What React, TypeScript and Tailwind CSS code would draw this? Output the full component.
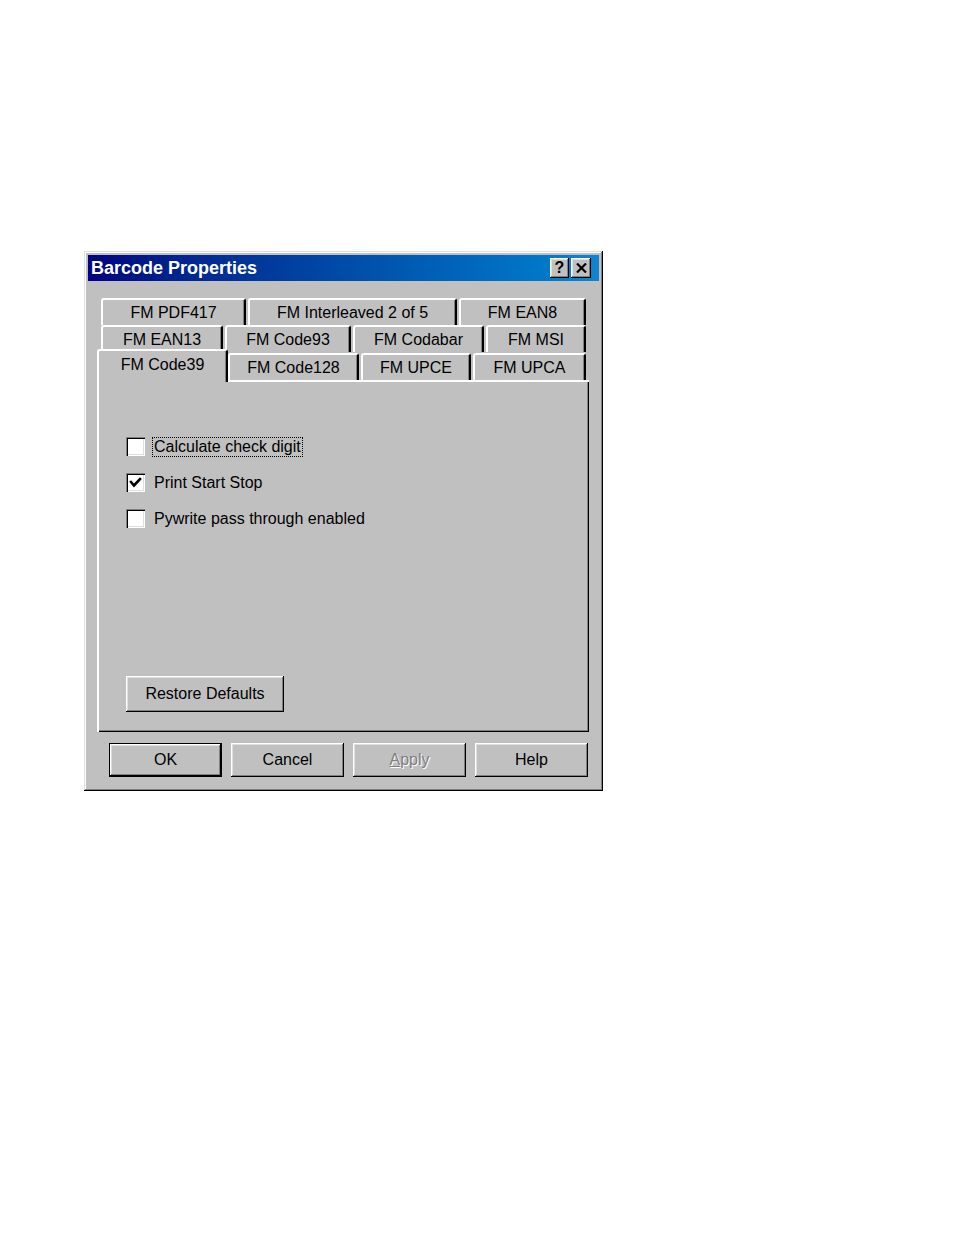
import React from "react";

const font = { fontFamily: '"Liberation Sans", Arial, sans-serif' };

const raised =
  "shadow-[inset_-1px_-1px_0_#000,inset_1px_1px_0_#fff,inset_-2px_-2px_0_#808080,inset_2px_2px_0_#dfdfdf]";

type Tab = { label: string; w: string };

const row1: Tab[] = [
  { label: "FM PDF417", w: "w-[145px]" },
  { label: "FM Interleaved 2 of 5", w: "w-[209px]" },
  { label: "FM EAN8", w: "w-[127px]" },
];

const row2: Tab[] = [
  { label: "FM EAN13", w: "w-[122px]" },
  { label: "FM Code93", w: "w-[126px]" },
  { label: "FM Codabar", w: "w-[131px]" },
  { label: "FM MSI", w: "w-[100px]" },
];

const row3: Tab[] = [
  { label: "FM Code128", w: "w-[131px]" },
  { label: "FM UPCE", w: "w-[110px]" },
  { label: "FM UPCA", w: "w-[113px]" },
];

function TabButton({ label, w }: Tab) {
  return (
    <div
      className={`${w} h-[27px] flex items-center justify-center rounded-t-[3px] border-t-2 border-l-2 border-r-2 border-t-white border-l-white border-r-black bg-[#c0c0c0] text-[16px] text-black shadow-[inset_-1px_0_0_#808080]`}
    >
      {label}
    </div>
  );
}

function Checkbox({
  label,
  checked,
  focused,
}: {
  label: string;
  checked?: boolean;
  focused?: boolean;
}) {
  return (
    <div className="flex h-[19px] items-center">
      <div className="flex h-[19px] w-[19px] shrink-0 items-center justify-center bg-white shadow-[inset_1px_1px_0_#808080,inset_2px_2px_0_#000,inset_-1px_-1px_0_#fff,inset_-2px_-2px_0_#dfdfdf]">
        {checked && (
          <svg width="13" height="13" viewBox="0 0 13 13">
            <path
              d="M2 6 L5 9.5 L11 3"
              fill="none"
              stroke="#000"
              strokeWidth="2.6"
              strokeLinecap="square"
            />
          </svg>
        )}
      </div>
      <span
        className={`ml-[7px] text-[16px] leading-[18px] text-black ${
          focused ? "border border-dotted border-black px-[1px]" : "border border-transparent px-[1px]"
        }`}
      >
        {label}
      </span>
    </div>
  );
}

function DialogButton({
  children,
  isDefault,
  disabled,
}: {
  children: React.ReactNode;
  isDefault?: boolean;
  disabled?: boolean;
}) {
  return (
    <div
      className={`flex h-[34px] w-[113px] items-center justify-center bg-[#c0c0c0] text-[16px] ${
        isDefault
          ? "border border-black shadow-[inset_-1px_-1px_0_#000,inset_1px_1px_0_#fff,inset_-2px_-2px_0_#808080,inset_2px_2px_0_#dfdfdf]"
          : raised
      } ${disabled ? "text-[#808080] [text-shadow:1px_1px_0_#fff]" : "text-black"}`}
    >
      {children}
    </div>
  );
}

export default function App() {
  return (
    <div className="min-h-[1235px] w-full bg-white pl-[84px] pt-[251px]" style={font}>
      <div
        className={`flex h-[540px] w-[519px] flex-col bg-[#c0c0c0] p-[4px] shadow-[inset_-1px_-1px_0_#000,inset_1px_1px_0_#dfdfdf,inset_-2px_-2px_0_#808080,inset_2px_2px_0_#fff]`}
      >
        {/* title bar */}
        <div className="flex h-[26px] shrink-0 items-center justify-between bg-gradient-to-r from-[#000080] to-[#1084d0] pl-[3px] pr-[8px]">
          <span className="text-[18px] font-bold leading-none text-white">
            Barcode Properties
          </span>
          <div className="flex gap-[2px]">
            <div
              className={`flex h-[20px] w-[19px] items-center justify-center bg-[#c0c0c0] text-[16px] font-bold leading-none text-black ${raised}`}
            >
              ?
            </div>
            <div
              className={`flex h-[20px] w-[20px] items-center justify-center bg-[#c0c0c0] ${raised}`}
            >
              <svg width="11" height="10" viewBox="0 0 11 10">
                <path d="M1 0.5 L10 9.5 M10 0.5 L1 9.5" stroke="#000" strokeWidth="2.2" />
              </svg>
            </div>
          </div>
        </div>

        {/* body */}
        <div className="flex flex-1 flex-col pl-[9px] pr-[10px] pt-[17px]">
          <div className="flex flex-col">
            <div className="ml-[4px] flex gap-[2px]">
              {row1.map((t) => (
                <TabButton key={t.label} {...t} />
              ))}
            </div>
            <div className="ml-[4px] flex gap-[2px]">
              {row2.map((t) => (
                <TabButton key={t.label} {...t} />
              ))}
            </div>
            <div className="-mt-[3px] flex h-[31px] items-end">
              <div className="relative z-10 -mb-[2px] flex h-[33px] w-[131px] items-center justify-center rounded-t-[3px] border-t-2 border-l-2 border-r-2 border-t-white border-l-white border-r-black bg-[#c0c0c0] pb-[3px] text-[16px] text-black shadow-[inset_-1px_0_0_#808080]">
                FM Code39
              </div>
              <div className="flex h-[28px] items-end">
                <TabButton {...row3[0]} />
              </div>
              <div className="ml-[2px] flex h-[28px] items-end">
                <TabButton {...row3[1]} />
              </div>
              <div className="ml-[2px] flex h-[28px] items-end">
                <TabButton {...row3[2]} />
              </div>
            </div>
          </div>

          {/* panel */}
          <div className="flex h-[352px] w-[492px] flex-col pb-[20px] pl-[29px] pt-[57px] shadow-[inset_2px_2px_0_#fff,inset_-1px_-1px_0_#000,inset_-2px_-2px_0_#808080]">
            <div className="flex flex-col gap-[17px]">
              <Checkbox label="Calculate check digit" focused />
              <Checkbox label="Print Start Stop" checked />
              <Checkbox label="Pywrite pass through enabled" />
            </div>
            <div
              className={`mt-auto flex h-[36px] w-[158px] items-center justify-center bg-[#c0c0c0] text-[16px] text-black ${raised}`}
            >
              Restore Defaults
            </div>
          </div>

          {/* dialog buttons */}
          <div className="ml-[12px] mt-[11px] flex gap-[9px]">
            <DialogButton isDefault>OK</DialogButton>
            <DialogButton>Cancel</DialogButton>
            <DialogButton disabled>
              <span className="underline">A</span>pply
            </DialogButton>
            <DialogButton>Help</DialogButton>
          </div>
        </div>
      </div>
    </div>
  );
}
